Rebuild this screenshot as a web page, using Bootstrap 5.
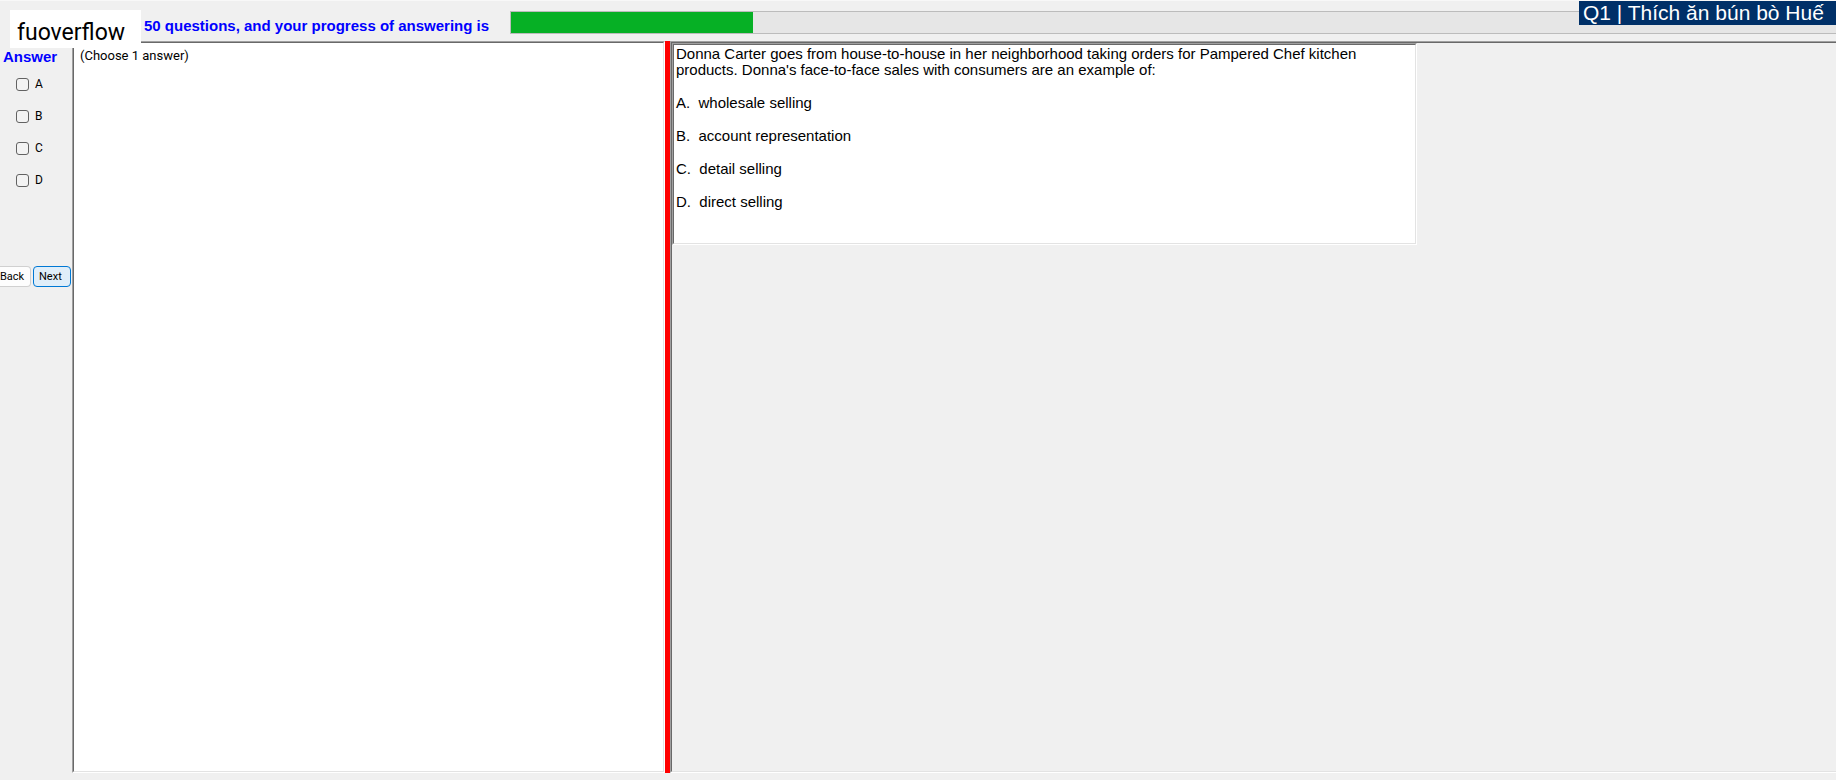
<!DOCTYPE html>
<html lang="en">
<head>
<meta charset="utf-8">
<meta name="viewport" content="width=device-width, initial-scale=1">
<title>Exam</title>
<link href="https://cdn.jsdelivr.net/npm/bootstrap@5.3.0/dist/css/bootstrap.min.css" rel="stylesheet">
<style>
  body { background: #f0f0f0; color: #000; font-family: "Liberation Sans", Arial, sans-serif; font-size: 12px; border-top: 1px solid #f8f8f8; }
  .exam-top { height: 40px; }
  .brand-tag { top: 9px; left: 10px; width: 131px; height: 38px; padding-left: 7px; background: #fff; font: 23px/45px Roboto, sans-serif; z-index: 2; }
  .blue-label { color: #00f; font-weight: 700; font-size: 15px; line-height: 16px; }
  .status-text { padding: 9px 0 0 144px; width: 510px; }
  .progress { --bs-progress-height: 23px; --bs-progress-bg: #e6e6e6; --bs-progress-bar-bg: #06b025; --bs-progress-border-radius: 0; border: 1px solid #bcbcbc; border-right: 0; margin-top: 10px; }
  .player-tag { padding: 0 8px 0 4px; background: #003068; color: #fff; font-size: 21px; line-height: 24px; min-width: 257px; }
  .answer-col { width: 72px; }
  .answer-title { padding: 8px 0 0 3px; }
  .choices { padding: 10px 0 0 16px; }
  .choice { display: flex; align-items: center; min-height: 0; height: 18px; padding: 0; margin: 0 0 14px; font: 12px/18px Roboto, sans-serif; }
  .choice .form-check-input { float: none; width: 13px; height: 13px; margin: 0 6px 0 0; border: 1px solid #626262; border-radius: 3px; background-color: #f3f3f3; }
  .nav-buttons { margin-top: 77px; gap: 2px; }
  .nav-buttons .btn { height: 21px; padding: 0 5px; border-radius: 4px; font: 11px/19px Roboto, sans-serif; color: #000; white-space: nowrap; text-align: left; }
  .nav-buttons .btn-back { width: 31px; padding: 0; border-color: #d0d0d0; border-left: 0; border-radius: 0 4px 4px 0; background: #fdfdfd; }
  .nav-buttons .btn-next { width: 38px; border-color: #0078d4; background: #e0eef9; }
  .sunken { border: 1px solid; border-color: #a0a0a0 #fff #fff #a0a0a0; }
  .sunken-inner { border: 1px solid; border-color: #696969 #e3e3e3 #e3e3e3 #696969; }
  .workspace { padding-bottom: 7px; }
  .note-pane { width: 593px; }
  .note-text { padding: 3px 6px; font: 13px/20px Roboto, sans-serif; }
  .splitter { width: 5px; background: #f00; }
  .open-right, .open-right > .sunken-inner { border-right: 0; }
  .question-box { width: 745px; max-width: 100%; }
  .question-text { min-height: 200px; padding: 1px 2px 0; font-size: 15px; line-height: 16px; }
  .question-text p { width: 710px; max-width: 100%; margin: 0 0 17px; }
</style>
</head>
<body class="d-flex flex-column min-vh-100 overflow-hidden">
<header class="exam-top d-flex position-relative flex-shrink-0">
  <div class="brand-tag position-absolute">fuoverflow</div>
  <div class="blue-label status-text flex-shrink-0 align-self-center text-nowrap">50 questions, and your progress of answering is</div>
  <div class="progress flex-grow-1" role="progressbar" aria-label="Progress of answering" aria-valuenow="18" aria-valuemin="0" aria-valuemax="100"><div class="progress-bar" style="width:18.3%"></div></div>
  <div class="player-tag position-absolute top-0 end-0 text-nowrap">Q1 | Thích ăn bún bò Huế</div>
</header>
<main class="workspace d-flex flex-grow-1">
  <aside class="answer-col flex-shrink-0">
    <div class="blue-label answer-title">Answer</div>
    <div class="choices">
      <div class="choice form-check"><input class="form-check-input" type="checkbox" id="a"><label for="a">A</label></div>
      <div class="choice form-check"><input class="form-check-input" type="checkbox" id="b"><label for="b">B</label></div>
      <div class="choice form-check"><input class="form-check-input" type="checkbox" id="c"><label for="c">C</label></div>
      <div class="choice form-check"><input class="form-check-input" type="checkbox" id="d"><label for="d">D</label></div>
    </div>
    <div class="nav-buttons d-flex">
      <button class="btn btn-back" type="button">Back</button>
      <button class="btn btn-next" type="button">Next</button>
    </div>
  </aside>
  <section class="note-pane sunken flex-shrink-0 d-flex">
    <div class="sunken-inner note-text bg-white flex-grow-1">(Choose 1 answer)</div>
  </section>
  <div class="splitter flex-shrink-0"></div>
  <section class="sunken open-right flex-grow-1 d-flex">
    <div class="sunken-inner flex-grow-1">
      <div class="question-box sunken">
        <div class="sunken-inner question-text bg-white">
          <p>Donna Carter goes from house-to-house in her neighborhood taking orders for Pampered Chef kitchen products. Donna's face-to-face sales with consumers are an example of:</p>
          <p>A.&nbsp; wholesale selling</p>
          <p>B.&nbsp; account representation</p>
          <p>C.&nbsp; detail selling</p>
          <p>D.&nbsp; direct selling</p>
        </div>
      </div>
    </div>
  </section>
</main>
<script src="https://cdn.jsdelivr.net/npm/bootstrap@5.3.0/dist/js/bootstrap.bundle.min.js"></script>
</body>
</html>
